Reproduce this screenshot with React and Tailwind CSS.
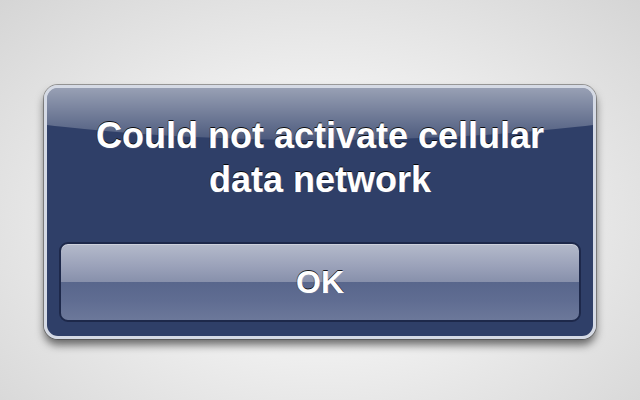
export default function App() {
    return (
        <div className="flex h-[400px] w-[640px] justify-center bg-[radial-gradient(ellipse_at_50%_55%,#f7f7f7_0%,#eeeeee_45%,#d5d5d5_100%)] pt-[85px] font-['Liberation_Sans',Arial,sans-serif]">
            {/* alert frame: light rim + dark hairline + drop shadow */}
            <div className="h-[254px] w-[552px] rounded-[14px] border-[3px] border-[#d5dae5] shadow-[0_0_0_1px_rgba(60,60,60,0.45),0_6px_9px_rgba(0,0,0,0.55)]">
                <div className="relative flex h-full flex-col overflow-hidden rounded-[11px] bg-[#2f3f68] px-[12px] pb-[14px] pt-[26px]">
                    {/* top gloss */}
                    <div className="pointer-events-none absolute left-[-273px] top-[-172px] h-[224px] w-[1092px] rounded-[50%] bg-[linear-gradient(to_bottom,rgba(255,255,255,0.55)_74%,rgba(255,255,255,0.14)_100%)]" />

                    <p className="relative text-center text-[36px] font-bold leading-[44px] text-white [text-shadow:0_-1px_0_rgba(0,0,0,0.9),-1px_0_0_rgba(0,0,0,0.4),0_0_1px_rgba(255,255,255,0.6)]">
                        Could not activate cellular
                        <br />
                        data network
                    </p>

                    <button
                        type="button"
                        className="relative mt-[40px] flex h-[80px] w-full items-center justify-center overflow-hidden rounded-[9px] border-[2px] border-[#1d284a] bg-[linear-gradient(to_bottom,#b4bacb_0%,#9aa1b9_30%,#8790ab_50%,#58668c_50%,#606d92_75%,#6c789a_100%)] shadow-[inset_0_1px_0_rgba(255,255,255,0.35)]"
                    >
                        <span className="text-[32px] font-bold leading-none text-white [text-shadow:0_-1px_0_rgba(0,0,0,0.85),-1px_0_0_rgba(0,0,0,0.35),0_0_1px_rgba(255,255,255,0.6)]">
                            OK
                        </span>
                    </button>
                </div>
            </div>
        </div>
    );
}
